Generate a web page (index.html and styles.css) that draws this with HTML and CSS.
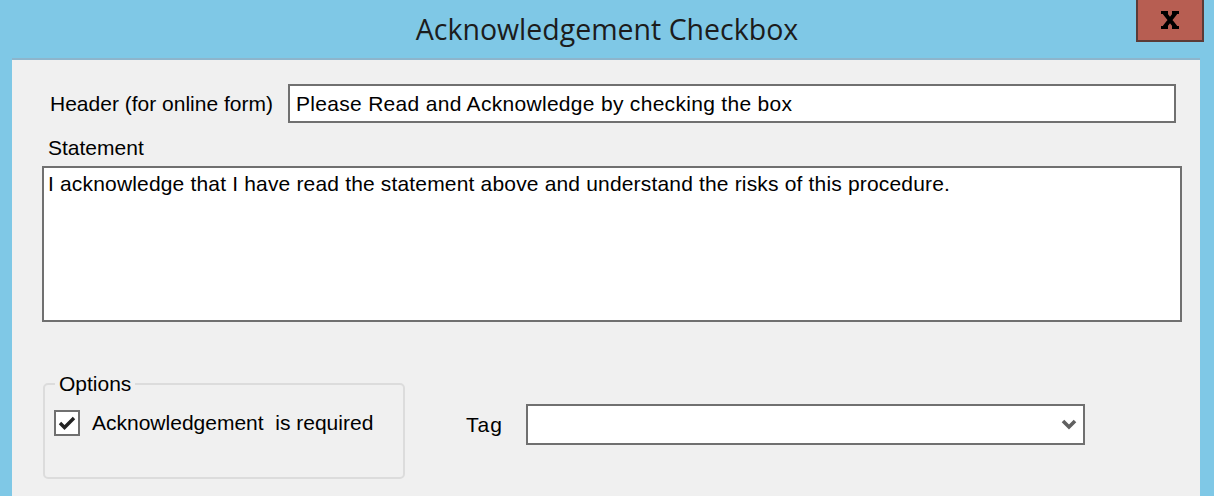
FILE: index.html
```html
<!DOCTYPE html>
<html lang="en">
<head>
  <meta charset="UTF-8">
  <title>Acknowledgement Checkbox</title>
  <link rel="stylesheet" href="styles.css">
</head>
<body>
  <div class="titlebar">
    <span></span>
    <h1 class="title">Acknowledgement Checkbox</h1>
    <button class="close" type="button" aria-label="Close">
      <svg width="18" height="18" viewBox="0 0 18 18">
        <path d="M3.5 2 L14.5 16 M14.5 2 L3.5 16" stroke="#000" stroke-width="4" fill="none"/>
        <path d="M0 1.5 H7 M11 1.5 H18 M0 16.5 H7 M11 16.5 H18" stroke="#000" stroke-width="3" fill="none"/>
      </svg>
    </button>
  </div>

  <div class="panel">
    <div class="header-row">
      <label class="lbl" for="header">Header (for online form)</label>
      <div class="field">Please Read and Acknowledge by checking the box</div>
    </div>

    <div class="statement-label">Statement</div>
    <div class="statement">I acknowledge that I have read the statement above and understand the risks of this procedure.</div>

    <div class="bottom">
      <fieldset class="options">
        <legend>Options</legend>
        <div class="check-row">
          <span class="checkbox">
            <svg width="18" height="16" viewBox="0 0 18 16">
              <path d="M2 8 L6.5 12.5 L16 3" stroke="#222" stroke-width="3.4" fill="none"/>
            </svg>
          </span>
          <span>Acknowledgement&nbsp; is required</span>
        </div>
      </fieldset>

      <div class="tag-row">
        <span class="tag-label">Tag</span>
        <div class="select">
          <svg width="16" height="13" viewBox="0 0 16 13">
            <path d="M2 3 L8 9 L14 3" stroke="#606060" stroke-width="3.6" fill="none"/>
          </svg>
        </div>
      </div>
    </div>
  </div>
</body>
</html>
```

FILE: styles.css
```css
body {
  margin: 0;
  background: #7fc8e6;
  font-family: 'Liberation Sans', Arial, sans-serif;
  font-size: 21px;
  color: #000;
  height: 496px;
  overflow: hidden;
}
.titlebar {
  height: 58px;
  display: grid;
  grid-template-columns: 1fr auto 1fr;
  align-items: start;
}
.title {
  margin: 0;
  font-family: 'Open Sans', 'Noto Sans', sans-serif;
  font-weight: 400;
  font-size: 28.5px;
  line-height: 58px;
  color: #1c1c1c;
}
.close {
  justify-self: end;
  margin-right: 10px;
  width: 68px;
  height: 42px;
  padding: 0;
  background: #b75e52;
  border: 2px solid #5b3b37;
  border-top: none;
  display: flex;
  align-items: center;
  justify-content: center;
}
.panel {
  margin: 0 14px 0 12px;
  background: #f0f0f0;
  border-top: 2px solid #8db5cc;
  height: 436px;
  padding: 24px 18px 0 30px;
}
.header-row {
  display: grid;
  grid-template-columns: 246px 1fr;
  align-items: center;
  margin-right: 6px;
}
.lbl {
  padding-left: 8px;
}
.field {
  height: 35px;
  line-height: 35px;
  border: 2px solid #707070;
  background: #fff;
  padding-left: 6px;
  letter-spacing: 0.3px;
}
.statement-label {
  margin: 13px 0 6px;
  padding-left: 6px;
  line-height: 24px;
}
.statement {
  height: 148px;
  border: 2px solid #707070;
  background: #fff;
  padding: 4px 4px 0;
  line-height: 24px;
  letter-spacing: 0.17px;
}
.bottom {
  display: flex;
  align-items: flex-start;
  margin-top: 50px;
}
.options {
  margin: 0 0 0 1px;
  box-sizing: border-box;
  width: 362px;
  padding: 0 0 41px 9px;
  border: 2px solid #dcdcdc;
  border-radius: 5px;
}
.options legend {
  margin-left: 1px;
  padding: 0 4px;
  line-height: 24px;
}
.check-row {
  margin-top: 14px;
  display: flex;
  align-items: center;
  gap: 12px;
}
.checkbox {
  width: 22px;
  height: 22px;
  border: 2px solid #707070;
  background: #fff;
  display: flex;
  align-items: center;
  justify-content: center;
}
.tag-row {
  display: flex;
  align-items: center;
  margin: 32px 0 0 61px;
}
.tag-label {
  width: 60px;
  letter-spacing: 1px;
}
.select {
  box-sizing: border-box;
  width: 559px;
  height: 41px;
  border: 2px solid #707070;
  background: #fff;
  display: flex;
  align-items: center;
  justify-content: flex-end;
  padding-right: 6px;
}
```
